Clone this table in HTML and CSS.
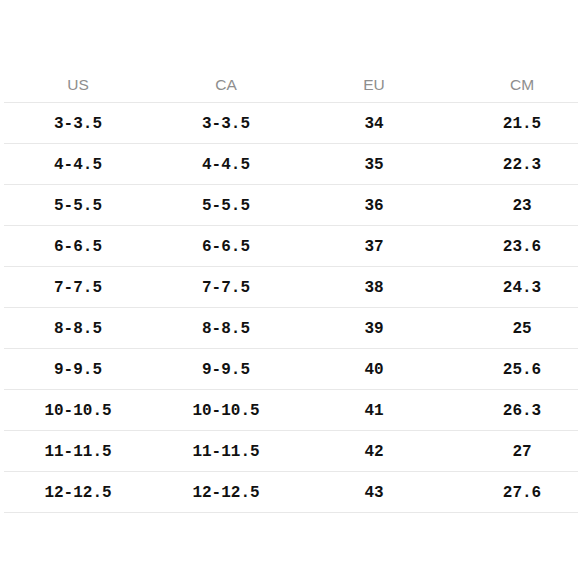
FILE: index.html
```html
<!DOCTYPE html>
<html>
<head>
<meta charset="utf-8">
<link rel="stylesheet" href="styles.css">
</head>
<body>
<div class="wrap">
  <div class="table">
    <div class="row head"><div>US</div><div>CA</div><div>EU</div><div>CM</div></div>
    <div class="row"><div>3-3.5</div><div>3-3.5</div><div>34</div><div>21.5</div></div>
    <div class="row"><div>4-4.5</div><div>4-4.5</div><div>35</div><div>22.3</div></div>
    <div class="row"><div>5-5.5</div><div>5-5.5</div><div>36</div><div>23</div></div>
    <div class="row"><div>6-6.5</div><div>6-6.5</div><div>37</div><div>23.6</div></div>
    <div class="row"><div>7-7.5</div><div>7-7.5</div><div>38</div><div>24.3</div></div>
    <div class="row"><div>8-8.5</div><div>8-8.5</div><div>39</div><div>25</div></div>
    <div class="row"><div>9-9.5</div><div>9-9.5</div><div>40</div><div>25.6</div></div>
    <div class="row"><div>10-10.5</div><div>10-10.5</div><div>41</div><div>26.3</div></div>
    <div class="row"><div>11-11.5</div><div>11-11.5</div><div>42</div><div>27</div></div>
    <div class="row"><div>12-12.5</div><div>12-12.5</div><div>43</div><div>27.6</div></div>
  </div>
</div>
</body>
</html>
```
FILE: styles.css
```css
html, body {
  margin: 0;
  padding: 0;
  background: #fff;
}
.wrap {
  width: 574px;
  margin-left: 4px;
  padding-top: 62px;
  overflow: hidden;
}
.table {
  width: 594px;
}
.row {
  display: grid;
  grid-template-columns: repeat(4, 148px);
  height: 41px;
  padding-top: 2px;
  align-items: center;
  border-bottom: 1px solid #e8e8e8;
  box-sizing: border-box;
  font-family: "Liberation Mono", "Courier New", monospace;
  font-weight: bold;
  font-size: 16px;
  color: #111;
}
.row > div {
  text-align: center;
}
.row.head {
  font-family: "Liberation Sans", Arial, sans-serif;
  font-weight: normal;
  font-size: 15.5px;
  color: #8e8e8e;
  padding-top: 6px;
}
```
